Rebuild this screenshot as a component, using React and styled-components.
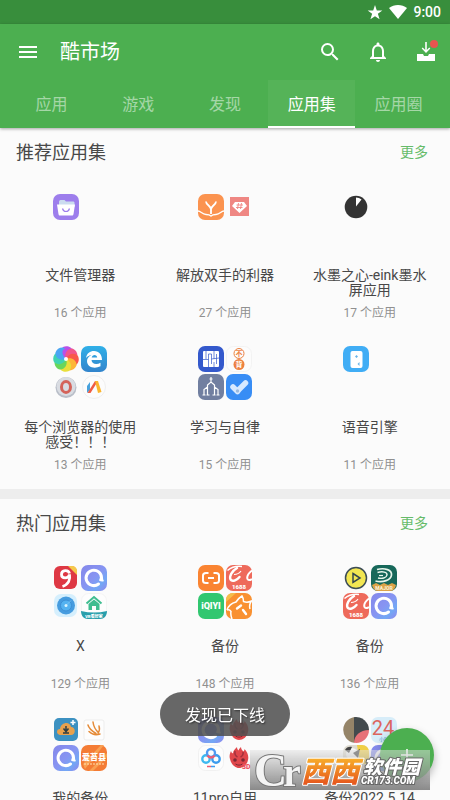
import React from 'react'
import styled, { createGlobalStyle } from 'styled-components'

const GlobalStyle = createGlobalStyle`
* {
  box-sizing: border-box;
}
body {
  margin: 0;
  background-color: #fbfbfb;
  font-family: Roboto, "Noto Sans CJK SC", sans-serif;
}
button {
  border: none;
  padding: 0;
  background: none;
  font-family: inherit;
  cursor: pointer;
}
a {
  text-decoration: none;
}
`

const Screen = styled.div`
height: 100vh;
display: flex;
flex-direction: column;
overflow: hidden;
`

const StatusBar = styled.div`
height: 24px;
flex-shrink: 0;
padding: 0 9px;
display: flex;
align-items: center;
justify-content: flex-end;
gap: 6px;
background-color: #388e3c;
color: white;
font-size: 14px;
font-weight: 500;
`

const AppBar = styled.header`
flex-shrink: 0;
z-index: 1;
background-color: #4caf50;
box-shadow: 0 1px 3px rgba(0, 0, 0, 0.35);
`

const Toolbar = styled.div`
height: 56px;
padding: 0 12px 0 16px;
display: flex;
align-items: center;
color: white;
`

const AppTitle = styled.h1`
flex: 1;
margin: 0 0 0 20px;
font-size: 20px;
font-weight: 400;
line-height: 28px;
`

const ToolbarActions = styled.div`
display: flex;
gap: 24px;
`

const IconButton = styled.button`
width: 24px;
height: 24px;
color: white;

svg {
  display: block;
}
`

const Tabs = styled.nav`
height: 48px;
padding: 0 8px;
display: flex;
`

const Tab = styled.button`
flex: 1;
font-size: 16px;
color: ${(props) => (props.$active ? 'white' : 'rgba(255, 255, 255, 0.5)')};
background-color: ${(props) => (props.$active ? 'rgba(255, 255, 255, 0.05)' : 'transparent')};
border-bottom: 2px solid ${(props) => (props.$active ? 'white' : 'transparent')};
`

const Content = styled.main`
flex: 1;
min-height: 0;
overflow: hidden;
`

const Section = styled.section`
padding-bottom: 9px;
border-bottom: 10px solid #ededed;
`

const SectionHeader = styled.div`
height: 48px;
padding: 0 22px 2px 16px;
display: flex;
align-items: center;
justify-content: space-between;
`

const SectionTitle = styled.h2`
margin: 0;
font-size: 18px;
font-weight: 400;
color: #484848;
`

const MoreLink = styled.a`
font-size: 14px;
color: #66bb6a;
`

const Grid = styled.div`
padding: 0 8px;
display: grid;
grid-template-columns: repeat(3, 1fr);
`

const Card = styled.a`
height: 152px;
padding: 18px 14px 0;
display: flex;
flex-direction: column;
align-items: center;
text-align: center;
`

const IconQuad = styled.div`
width: 54px;
height: 54px;
flex-shrink: 0;
display: grid;
grid-template-columns: 26px 26px;
grid-template-rows: 26px 26px;
gap: 2px;

svg {
  display: block;
}
`

const CardTitle = styled.div`
height: 30px;
flex-shrink: 0;
margin-top: 20px;
font-size: 14px;
line-height: 15px;
color: #484848;
`

const CardCount = styled.div`
margin-top: 6px;
font-size: 12px;
line-height: 18px;
color: #909090;
`

const Toast = styled.div`
position: fixed;
left: 50%;
bottom: 64px;
transform: translateX(-50%);
height: 44px;
padding: 0 25px;
display: flex;
align-items: center;
border-radius: 22px;
background-color: rgba(80, 80, 80, 0.87);
color: white;
font-size: 16px;
white-space: nowrap;
text-shadow: 1px 1px 2px rgba(0, 0, 0, 0.6);
`

const Fab = styled.button`
position: fixed;
right: 16px;
bottom: 18px;
width: 54px;
height: 54px;
display: flex;
align-items: center;
justify-content: center;
border-radius: 50%;
background-color: #4caf50;
box-shadow: 0 4px 8px rgba(0, 0, 0, 0.3);
`

const Watermark = styled.div`
position: fixed;
right: 20px;
bottom: 10px;
width: 180px;
height: 40px;
background: linear-gradient(rgba(225, 225, 225, 0.5), rgba(125, 125, 125, 0.9));

svg {
  display: block;
}
`

const Svg = ({ children }) => (
  <svg width="26" height="26" viewBox="0 0 26 26" fill="none">{children}</svg>
)

const Tile = ({ fill, r = 7 }) => <rect width="26" height="26" rx={r} fill={fill} />

const latin = 'Roboto, sans-serif'
const cjk = '"Noto Sans CJK SC", sans-serif'

const Ali = () => (
  <Svg>
    <Tile fill="#ee6a5b" />
    <path d="M1.500 5.500C5 2.500 11 1 16 1.500" stroke="#fff" strokeWidth="1.500" />
    <path d="M11 3C6 6 3 11 4.500 14.500c2 3 7 0 9-2.500" stroke="#fff" strokeWidth="2.400" strokeLinecap="round" />
    <path d="M8 9.500c3 0 5.500-1.500 7-3.500" stroke="#fff" strokeWidth="1.200" />
    <path d="M26 5.500c-3 2.500-5.500 6-4.500 8.500 1 1.500 3 1 4.500 0" stroke="#fff" strokeWidth="2" />
    <text x="13" y="23.500" fontSize="6" fontWeight="900" textAnchor="middle" fill="#fff" fontFamily={latin}>1688</text>
  </Svg>
)

const Swirl = () => (
  <Svg>
    <defs>
      <linearGradient id="swirl" x1="0" y1="0" x2="1" y2="1">
        <stop offset="0" stopColor="#8588ea" />
        <stop offset="0.500" stopColor="#8795f2" />
        <stop offset="0.750" stopColor="#72a8f5" />
        <stop offset="1" stopColor="#9385ec" />
      </linearGradient>
    </defs>
    <Tile fill="url(#swirl)" />
    <path d="M17.500 19A7.700 7.700 0 1 1 20.500 13" stroke="#fff" strokeWidth="3" strokeLinecap="round" />
    <path d="M19 12.500h3c0 1.500.3 2.500 1 3.500-1.500 1-3.500.5-5-.5z" fill="#fff" />
  </Svg>
)

const Antutu = ({ label }) => (
  <Svg>
    <path d="M4 14c-1-3 0-6 1-8 .5 1.500 1 2 2 2.500C7 5.500 9 4 11 2c0 1.500.5 2.500 1.500 3.500C13 4 14 3 15 2c0 2 1 3 2.500 4.500.8-.8 1-1.500 1-2.500C21.500 7 23 11 22 15c-1 5-5 8-9 8s-8-4-9-9z" fill="#e0474b" />
    <path d="M9 6c-.5 3 .5 5 2.500 6M17 7c.5 3-.5 4-2.500 5" stroke="#a3323d" strokeWidth="1.600" />
    <circle cx="9" cy="15" r="1.800" fill="#7b2934" />
    <circle cx="17" cy="15" r="1.800" fill="#7b2934" />
    <path d="M9.500 19c2.500 1.500 4.500 1.500 7 0" stroke="#7b2934" />
    {label && <text x="16" y="24" fontSize="7" fontWeight="900" fill="#ef5362" fontFamily={latin}>{label}</text>}
  </Svg>
)

const petals = ['#b950e8', '#f1558c', '#f9574b', '#fdb637', '#e8df3b', '#69d65b', '#3fd3b1', '#4aa5f2']

const appIcons = {
  files: (
    <Svg>
      <Tile fill="#9d7eec" />
      <path d="M6 8c0-1 .5-2 1.500-2h4l1.500 1.500h7c1 0 1.500.5 1.500 1.500v4H6z" fill="#cbdcef" />
      <path d="M4 10.500h18L20.500 20c-.2 1-.8 1.500-1.500 1.500H7c-1 0-1.300-.5-1.500-1.500z" fill="#fff" />
      <path d="M9.500 14.500c1 4 6 4 7 0" stroke="#9d7eec" strokeWidth="1.200" />
    </Svg>
  ),
  hands: (
    <Svg>
      <Tile fill="#fb934f" />
      <path d="M8 7.500c0 3.500 5 4 5 8V20M18 7.500c0 3.500-5 4-5 8" stroke="#fff" strokeWidth="1.800" />
      <path d="M0 17c3 0 4 3.500 8 3.500 2.500 0 4 .5 5 1.500 1-1 2.500-1.500 5-1.500 4 0 5-3.500 8-3.500" stroke="#fff" strokeWidth="1.300" />
    </Svg>
  ),
  gem: (
    <Svg>
      <rect x="4" y="3" width="19" height="19" fill="#ef8783" />
      <path d="M9 8h9l3 4-7.500 7L6 12z" fill="#fff" />
      <path d="M12.500 9l-1 6M15.500 9l-1 6M10.500 11h6.500M10 13.500h6.500" stroke="#ef8783" strokeWidth=".9" />
    </Svg>
  ),
  ink: (
    <Svg>
      <circle cx="13" cy="13" r="11.300" fill="#333" />
      <path d="M13 12.500V3.500c2 0 4 .7 5.500 2z" fill="#fff" />
    </Svg>
  ),
  pinwheel: (
    <Svg>
      {petals.map((color, i) => (
        <path key={color} d="M13 13C8 11 6 5 10 1c4-2 9 0 10 4-4-2-7 2-7 8z" fill={color} transform={`rotate(${i * 45} 13 13)`} />
      ))}
      <circle cx="13" cy="13" r="2" fill="#fff" />
    </Svg>
  ),
  edge: (
    <Svg>
      <defs>
        <linearGradient id="edge" x1="0" y1="0" x2="0" y2="1">
          <stop offset="0" stopColor="#30b0e8" />
          <stop offset="1" stopColor="#3284cc" />
        </linearGradient>
      </defs>
      <Tile fill="url(#edge)" />
      <path d="M5 12C6 7 9 5 13 5c5 0 8 3.500 8 9h-10.500c.2 4.500 5.500 5 9 2.800v3.500C13 23.500 6 21 6 15c0-2.800 2-4.800 4.500-6-2 .3-4 1.300-5.500 3zM10.700 11.500h5.500c-.2-3.500-5-3.500-5.500 0z" fill="#fff" />
    </Svg>
  ),
  opera: (
    <Svg>
      <circle cx="13" cy="13.500" r="10.500" fill="#b9bec8" />
      <circle cx="13" cy="12.500" r="9.500" fill="#d9dce2" />
      <ellipse cx="13" cy="13" rx="4.500" ry="5.500" fill="#d9dce2" stroke="#d4635a" strokeWidth="3" />
    </Svg>
  ),
  letterN: (
    <Svg>
      <circle cx="13" cy="13" r="11.500" fill="#fcfcfc" stroke="#efefef" />
      <path d="M6 12l3-4v8l-3 3z" fill="#48a2dd" />
      <path d="M6.500 19L14 7h3l-7.500 12z" fill="#ef5c43" />
      <path d="M14 7h3l3.500 11-3.500 1z" fill="#fbb52d" />
    </Svg>
  ),
  blocks: (
    <Svg>
      <Tile fill="#3459cc" />
      <rect x="5" y="5" width="16" height="16" rx="1" fill="#fff" />
      <path d="M8 5v8M10.500 8v13M10.500 8h3M13.500 8v10M16 5v8M18.500 8v10M5 13.500h5.500M13.500 13l7.500-1M16 16v5" stroke="#3459cc" strokeWidth=".7" />
    </Svg>
  ),
  words: (
    <Svg>
      <rect x=".5" y=".5" width="25" height="25" rx="7" fill="#fcfcfc" stroke="#f3f3f3" />
      <circle cx="13" cy="7.500" r="5" stroke="#ed8140" />
      <circle cx="13" cy="18.500" r="5.500" fill="#ed8140" />
      <text x="13" y="10" fontSize="7" fontWeight="700" textAnchor="middle" fill="#ed8140" fontFamily={cjk}>不</text>
      <text x="13" y="21" fontSize="7" fontWeight="700" textAnchor="middle" fill="#fff" fontFamily={cjk}>背</text>
    </Svg>
  ),
  tower: (
    <Svg>
      <Tile fill="#717fa0" />
      <path d="M13 3v5M11.500 5h3M9.500 21V11L13 8l3.500 3v10M9.500 13L6 15.500V21M16.500 13l3.500 2.500V21M4.500 21h3M18.500 21h3M8.500 21h3M14.500 21h3" stroke="#fff" strokeWidth="1.200" />
    </Svg>
  ),
  check: (
    <Svg>
      <Tile fill="#388df5" />
      <path d="M7 13l4.500 4.500" stroke="#d7e9ff" strokeWidth="5.500" strokeLinecap="round" />
      <path d="M11.500 17l8-8" stroke="#d7e9ff" strokeWidth="5.500" strokeLinecap="round" />
      <circle cx="11.500" cy="17" r="1.700" fill="#9bb9de" />
    </Svg>
  ),
  voice: (
    <Svg>
      <Tile fill="#40adf5" />
      <rect x="7.500" y="5" width="12" height="17" rx="2" fill="#fff" />
      <path d="M12 10.500l1.500-1.500 1.500 1.500-1.500 1.500zM14.500 18l2-2v4z" fill="#69b5e9" />
    </Svg>
  ),
  nine: (
    <Svg>
      <rect x="1" y="1" width="23" height="23" rx="6" fill="#de3844" />
      <path d="M15 1h4c3 0 5 2 5 5v4z" fill="#f5c84c" />
      <path d="M16.500 8.500c-1-4-8-4-8 1 0 4.500 7 4.500 8 0 1 5-1 10-7 12" stroke="#fff" strokeWidth="2.800" />
    </Svg>
  ),
  swirl: <Swirl />,
  radar: (
    <Svg>
      <rect x="1" y="1" width="23" height="23" rx="7" fill="#d5effd" />
      <circle cx="13" cy="12.500" r="9" fill="#469cdf" />
      <circle cx="13" cy="12.500" r="5.500" fill="#54b2f0" stroke="#3c8fd6" />
      <path d="M13 12.500l5-5" stroke="#8ccaf5" strokeWidth=".7" />
      <circle cx="13" cy="12.500" r="1.500" fill="#d9f4ff" />
    </Svg>
  ),
  house: (
    <Svg>
      <rect x=".5" y=".5" width="25" height="25" rx="7" fill="#fdfdfd" stroke="#f4f4f4" />
      <path d="M5.500 10.500L13 4l7.500 6.500" stroke="#3fbd90" strokeWidth="2" />
      <path d="M7.500 11l5.500-4.500L18.500 11v6H15v-4h-4v4H7.500z" fill="#3fbd90" />
      <path d="M0 18q13 3 26 0c0 5-3 8-7 8H7c-4 0-7-3-7-8z" fill="#299fac" />
      <text x="13" y="24.500" fontSize="4" fontWeight="900" textAnchor="middle" fill="#fff" fontFamily={cjk}>VR看好家</text>
    </Svg>
  ),
  bracket: (
    <Svg>
      <Tile fill="#fa8432" />
      <path d="M10.500 8H8c-2 0-3 1-3 2.500v5C5 17 6 18 8 18h2.500M15.500 8H18c2 0 3 1 3 2.500v5c0 1.500-1 2.500-3 2.500h-2.500M10 13h6" stroke="#fff" strokeWidth="2" />
    </Svg>
  ),
  ali: <Ali />,
  iqiyi: (
    <Svg>
      <Tile fill="#31c770" />
      <text x="13" y="16" fontSize="9" fontWeight="900" textAnchor="middle" fill="#fff" fontFamily={latin}>iQIYI</text>
    </Svg>
  ),
  cat: (
    <Svg>
      <Tile fill="#f99131" />
      <path d="M0 9V7c0-4 3-7 7-7h3z" fill="#f4be4b" />
      <path d="M1 17c1.500-4.500 5-7 9-8 1.500-2.500 3.500-4.500 6-6 1 1.500 1.500 3.500 1.500 5.500 2.500 1 5 1 8-.5-2 3-2.500 5-1.500 8M1 17c1.500-.5 3 0 4 1.500C4.500 21 5 23.500 6 26" stroke="#fff" strokeWidth="1.500" />
      <path d="M11 15.500l4-3M17 17l3 4" stroke="#fff" strokeWidth="2.400" strokeLinecap="round" />
    </Svg>
  ),
  play: (
    <Svg>
      <circle cx="13" cy="13" r="10.500" fill="#f2e652" stroke="#3d4d55" strokeWidth="1.500" />
      <path d="M10 8.500l7 4.500-7 4.500z" stroke="#34454d" strokeWidth="1.500" />
    </Svg>
  ),
  major: (
    <Svg>
      <Tile fill="#17685a" />
      <path d="M1 20l4-2 4 2 4-2 4 2 4-2 4 2c-1 4-3 6-6 6H7c-3 0-5-2-6-6z" fill="#dda348" />
      <path d="M6 4.500C14 2.500 21 5 20.500 10S12 18 4.500 16" stroke="#e9f6ec" strokeWidth="1.700" />
      <path d="M6.500 7.500c5-1.500 10-.5 9.500 2.500s-5 4-9 3" stroke="#e9f6ec" strokeWidth="1.400" />
      <path d="M8 10.500h4" stroke="#e9f6ec" strokeWidth="1.200" />
      <text x="13" y="24.500" fontSize="5" fontWeight="900" textAnchor="middle" fill="#f8edcd" fontFamily={latin}>MAJOR</text>
    </Svg>
  ),
  cloud: (
    <Svg>
      <rect x="1" y="1" width="24" height="23" rx="5" fill="#3c91c1" />
      <path d="M7 18c-4-.5-4-6 0-6 1-7 10-8 11-2 5 0 5 8 0 8z" fill="#e8a14c" />
      <path d="M13 9v5M10.500 11.500l2.500 3 2.500-3M10 16h6" stroke="#2d3d42" strokeWidth="1.500" />
      <path d="M20 3v5M17.500 5.500h5" stroke="#fff" strokeWidth="1.500" />
    </Svg>
  ),
  bird: (
    <Svg>
      <rect x="3" y="3" width="20" height="20" rx="2" fill="#fdfdfd" stroke="#ededed" />
      <path d="M7 8c1 4 4 6 8 8.500M12 5c.5 4 2.500 8 5.500 10.500M18 9c1 3 .5 5-1 7M8 14.500c3 3 7 4 11 2.500" stroke="#e58b38" strokeWidth="1.500" strokeLinecap="round" />
    </Svg>
  ),
  county: (
    <Svg>
      <Tile fill="#f47c35" />
      <path d="M2 19L20 0h3L4 24zM8 26L26 8v4L12 26z" fill="#f9a052" />
      <text x="13" y="15" fontSize="8" fontWeight="900" textAnchor="middle" fill="#fff" fontFamily={cjk}>爱苔县</text>
      <path d="M3 19h20" stroke="#ffe4b5" strokeWidth="1" strokeDasharray="2 1" />
    </Svg>
  ),
  netdisk: (
    <Svg>
      <rect x=".5" y=".5" width="25" height="25" rx="7" fill="#fdfdfd" stroke="#f1f1f1" />
      <circle cx="8" cy="14" r="3.700" stroke="#3fb9f0" strokeWidth="2.400" />
      <circle cx="18" cy="14" r="3.700" stroke="#3d9cee" strokeWidth="2.400" />
      <circle cx="13" cy="8" r="4" stroke="#4f9af2" strokeWidth="2.400" />
      <path d="M9.500 10.500a4 4 0 0 0 7 0" stroke="#ef5d72" strokeWidth="2.400" />
      <path d="M9 21.500h4" stroke="#ef5d72" strokeWidth="1.500" />
      <path d="M13 21.500h4" stroke="#3d9cee" strokeWidth="1.500" />
    </Svg>
  ),
  antutu: <Antutu />,
  antutu3d: <Antutu label="3D" />,
  palette: (
    <Svg>
      <path d="M13 0a13 13 0 0 0-2 25.800z" fill="#958468" />
      <path d="M11 .2A13 13 0 0 1 26 13L11 25.800z" fill="#434a4d" />
      <path d="M11 25.800c0-7 6-12.800 15-12.800 0 8-7 14-15 12.800z" fill="#e77177" />
    </Svg>
  ),
  points: (
    <Svg>
      <Tile fill="#d7edf9" />
      <text x="12" y="18" fontSize="20" textAnchor="middle" fill="#dc655f" fontFamily={latin}>24</text>
      <text x="13" y="24" fontSize="5" textAnchor="middle" fill="#4596d2" fontFamily={cjk}>小时</text>
    </Svg>
  ),
  panda: (
    <Svg>
      <Tile fill="#dedbd0" />
      <path d="M14 0h5c4 0 7 3 7 7v12h-9z" fill="#f0cf46" />
      <circle cx="9" cy="9" r="6" fill="#f6f6f6" />
      <path d="M2 5c1-3 5-4 7-3L6 8zM10 8l7-4-2 9z" fill="#444" />
    </Svg>
  ),
}

const tabs = ['应用', '游戏', '发现', '应用集', '应用圈']

const sections = [
  {
    title: '推荐应用集',
    items: [
      { name: '文件管理器', count: 16, icons: ['files'] },
      { name: '解放双手的利器', count: 27, icons: ['hands', 'gem'] },
      { name: '水墨之心-eink墨水屏应用', count: 17, icons: ['ink'] },
      { name: '每个浏览器的使用感受！！！', count: 13, icons: ['pinwheel', 'edge', 'opera', 'letterN'] },
      { name: '学习与自律', count: 15, icons: ['blocks', 'words', 'tower', 'check'] },
      { name: '语音引擎', count: 11, icons: ['voice'] },
    ],
  },
  {
    title: '热门应用集',
    items: [
      { name: 'X', count: 129, icons: ['nine', 'swirl', 'radar', 'house'] },
      { name: '备份', count: 148, icons: ['bracket', 'ali', 'iqiyi', 'cat'] },
      { name: '备份', count: 136, icons: ['play', 'major', 'ali', 'swirl'] },
      { name: '我的备份', icons: ['cloud', 'bird', 'swirl', 'county'] },
      { name: '11pro自用', icons: ['swirl', 'antutu', 'netdisk', 'antutu3d'] },
      { name: '备份2022.5.14', icons: ['palette', 'points', 'panda', 'swirl'] },
    ],
  },
]

const AppSection = ({ title, items }) => (
  <Section>
    <SectionHeader>
      <SectionTitle>{title}</SectionTitle>
      <MoreLink href="#more">更多</MoreLink>
    </SectionHeader>
    <Grid>
      {items.map((item, index) => (
        <Card href="#set" key={index}>
          <IconQuad>
            {item.icons.map((icon) => <React.Fragment key={icon}>{appIcons[icon]}</React.Fragment>)}
          </IconQuad>
          <CardTitle>{item.name}</CardTitle>
          {item.count && <CardCount>{item.count} 个应用</CardCount>}
        </Card>
      ))}
    </Grid>
  </Section>
)

const SiteLogo = () => (
  <svg width="180" height="40" viewBox="0 0 180 40">
    <defs>
      <linearGradient id="orange" x1="0" y1="0" x2="0" y2="1">
        <stop offset="0.200" stopColor="#f9b42c" />
        <stop offset="0.900" stopColor="#e4501c" />
      </linearGradient>
    </defs>
    <g fill="#f4f4f4" stroke="#777" strokeWidth="2" paintOrder="stroke" fontFamily='"Liberation Serif", serif' fontWeight="700">
      <text x="4" y="36" fontSize="46">C</text>
      <text x="33" y="36" fontSize="40">r</text>
    </g>
    <g fontFamily={cjk} fontWeight="900" fontStyle="italic" paintOrder="stroke" strokeLinejoin="round">
      <text x="51" y="32" fontSize="29" fill="url(#orange)" stroke="#fff" strokeWidth="2">西西</text>
      <text x="113" y="24" fontSize="19" fill="#fff" stroke="#666" strokeWidth="2">软件园</text>
    </g>
    <text x="111" y="34" fontSize="10" fontWeight="900" fontStyle="italic" fill="#fff" stroke="#666" strokeWidth="2" paintOrder="stroke" fontFamily={latin}>CR173.COM</text>
  </svg>
)

export default function App() {
  return (
    <Screen>
      <GlobalStyle />
      <StatusBar>
        <svg width="16" height="16" viewBox="0 0 24 24" fill="currentColor">
          <path d="M12 18.300L18.900 23l-2.600-8.200L23 9.700h-8.300L12 1.500 9.300 9.700H1l6.700 5.100L5.100 23z" />
        </svg>
        <svg width="18" height="14" viewBox="0 0 18 14" fill="currentColor">
          <path d="M9 14L0 3c5-4 13-4 18 0z" />
        </svg>
        <span>9:00</span>
      </StatusBar>
      <AppBar>
        <Toolbar>
          <IconButton aria-label="菜单">
            <svg width="24" height="24" viewBox="0 0 24 24" fill="currentColor">
              <path d="M3 18h18v-2H3v2zm0-5h18v-2H3v2zm0-7v2h18V6H3z" />
            </svg>
          </IconButton>
          <AppTitle>酷市场</AppTitle>
          <ToolbarActions>
            <IconButton aria-label="搜索">
              <svg width="24" height="24" viewBox="0 0 24 24" fill="currentColor">
                <path d="M15.500 14h-.79l-.28-.27A6.470 6.470 0 0 0 16 9.500 6.500 6.500 0 1 0 9.500 16c1.610 0 3.090-.59 4.230-1.570l.27.28v.79l5 4.990L20.490 19l-4.990-5zm-6 0C7.010 14 5 11.990 5 9.500S7.010 5 9.500 5 14 7.010 14 9.500 11.990 14 9.500 14z" />
              </svg>
            </IconButton>
            <IconButton aria-label="通知">
              <svg width="24" height="24" viewBox="0 0 24 24" fill="currentColor">
                <path d="M12 22c1.100 0 2-.9 2-2h-4c0 1.100.9 2 2 2zm6-6v-5c0-3.070-1.630-5.640-4.500-6.320V4c0-.83-.67-1.500-1.500-1.500s-1.500.67-1.500 1.500v.68C7.640 5.360 6 7.920 6 11v5l-2 2v1h16v-1l-2-2zm-2 1H8v-6c0-2.480 1.510-4.500 4-4.500s4 2.020 4 4.500v6z" />
              </svg>
            </IconButton>
            <IconButton aria-label="下载">
              <svg width="24" height="24" viewBox="0 0 24 24" fill="currentColor">
                <path d="M3 14h6l1 2h4l1-2h6v7H3z" />
                <path d="M11.200 2h1.600v8l2.500-2.500 1 1L12 13 7.700 8.500l1-1 2.500 2.500z" />
                <circle cx="20" cy="4" r="4" fill="#e8554f" />
              </svg>
            </IconButton>
          </ToolbarActions>
        </Toolbar>
        <Tabs>
          {tabs.map((tab) => <Tab key={tab} $active={tab === '应用集'}>{tab}</Tab>)}
        </Tabs>
      </AppBar>
      <Content>
        {sections.map((section) => <AppSection key={section.title} {...section} />)}
      </Content>
      <Toast role="status">发现已下线</Toast>
      <Fab aria-label="新建">
        <svg width="24" height="24" viewBox="0 0 24 24" stroke="white" strokeWidth="1.500">
          <path d="M12 6v12M6 12h12" />
        </svg>
      </Fab>
      <Watermark>
        <SiteLogo />
      </Watermark>
    </Screen>
  )
}
